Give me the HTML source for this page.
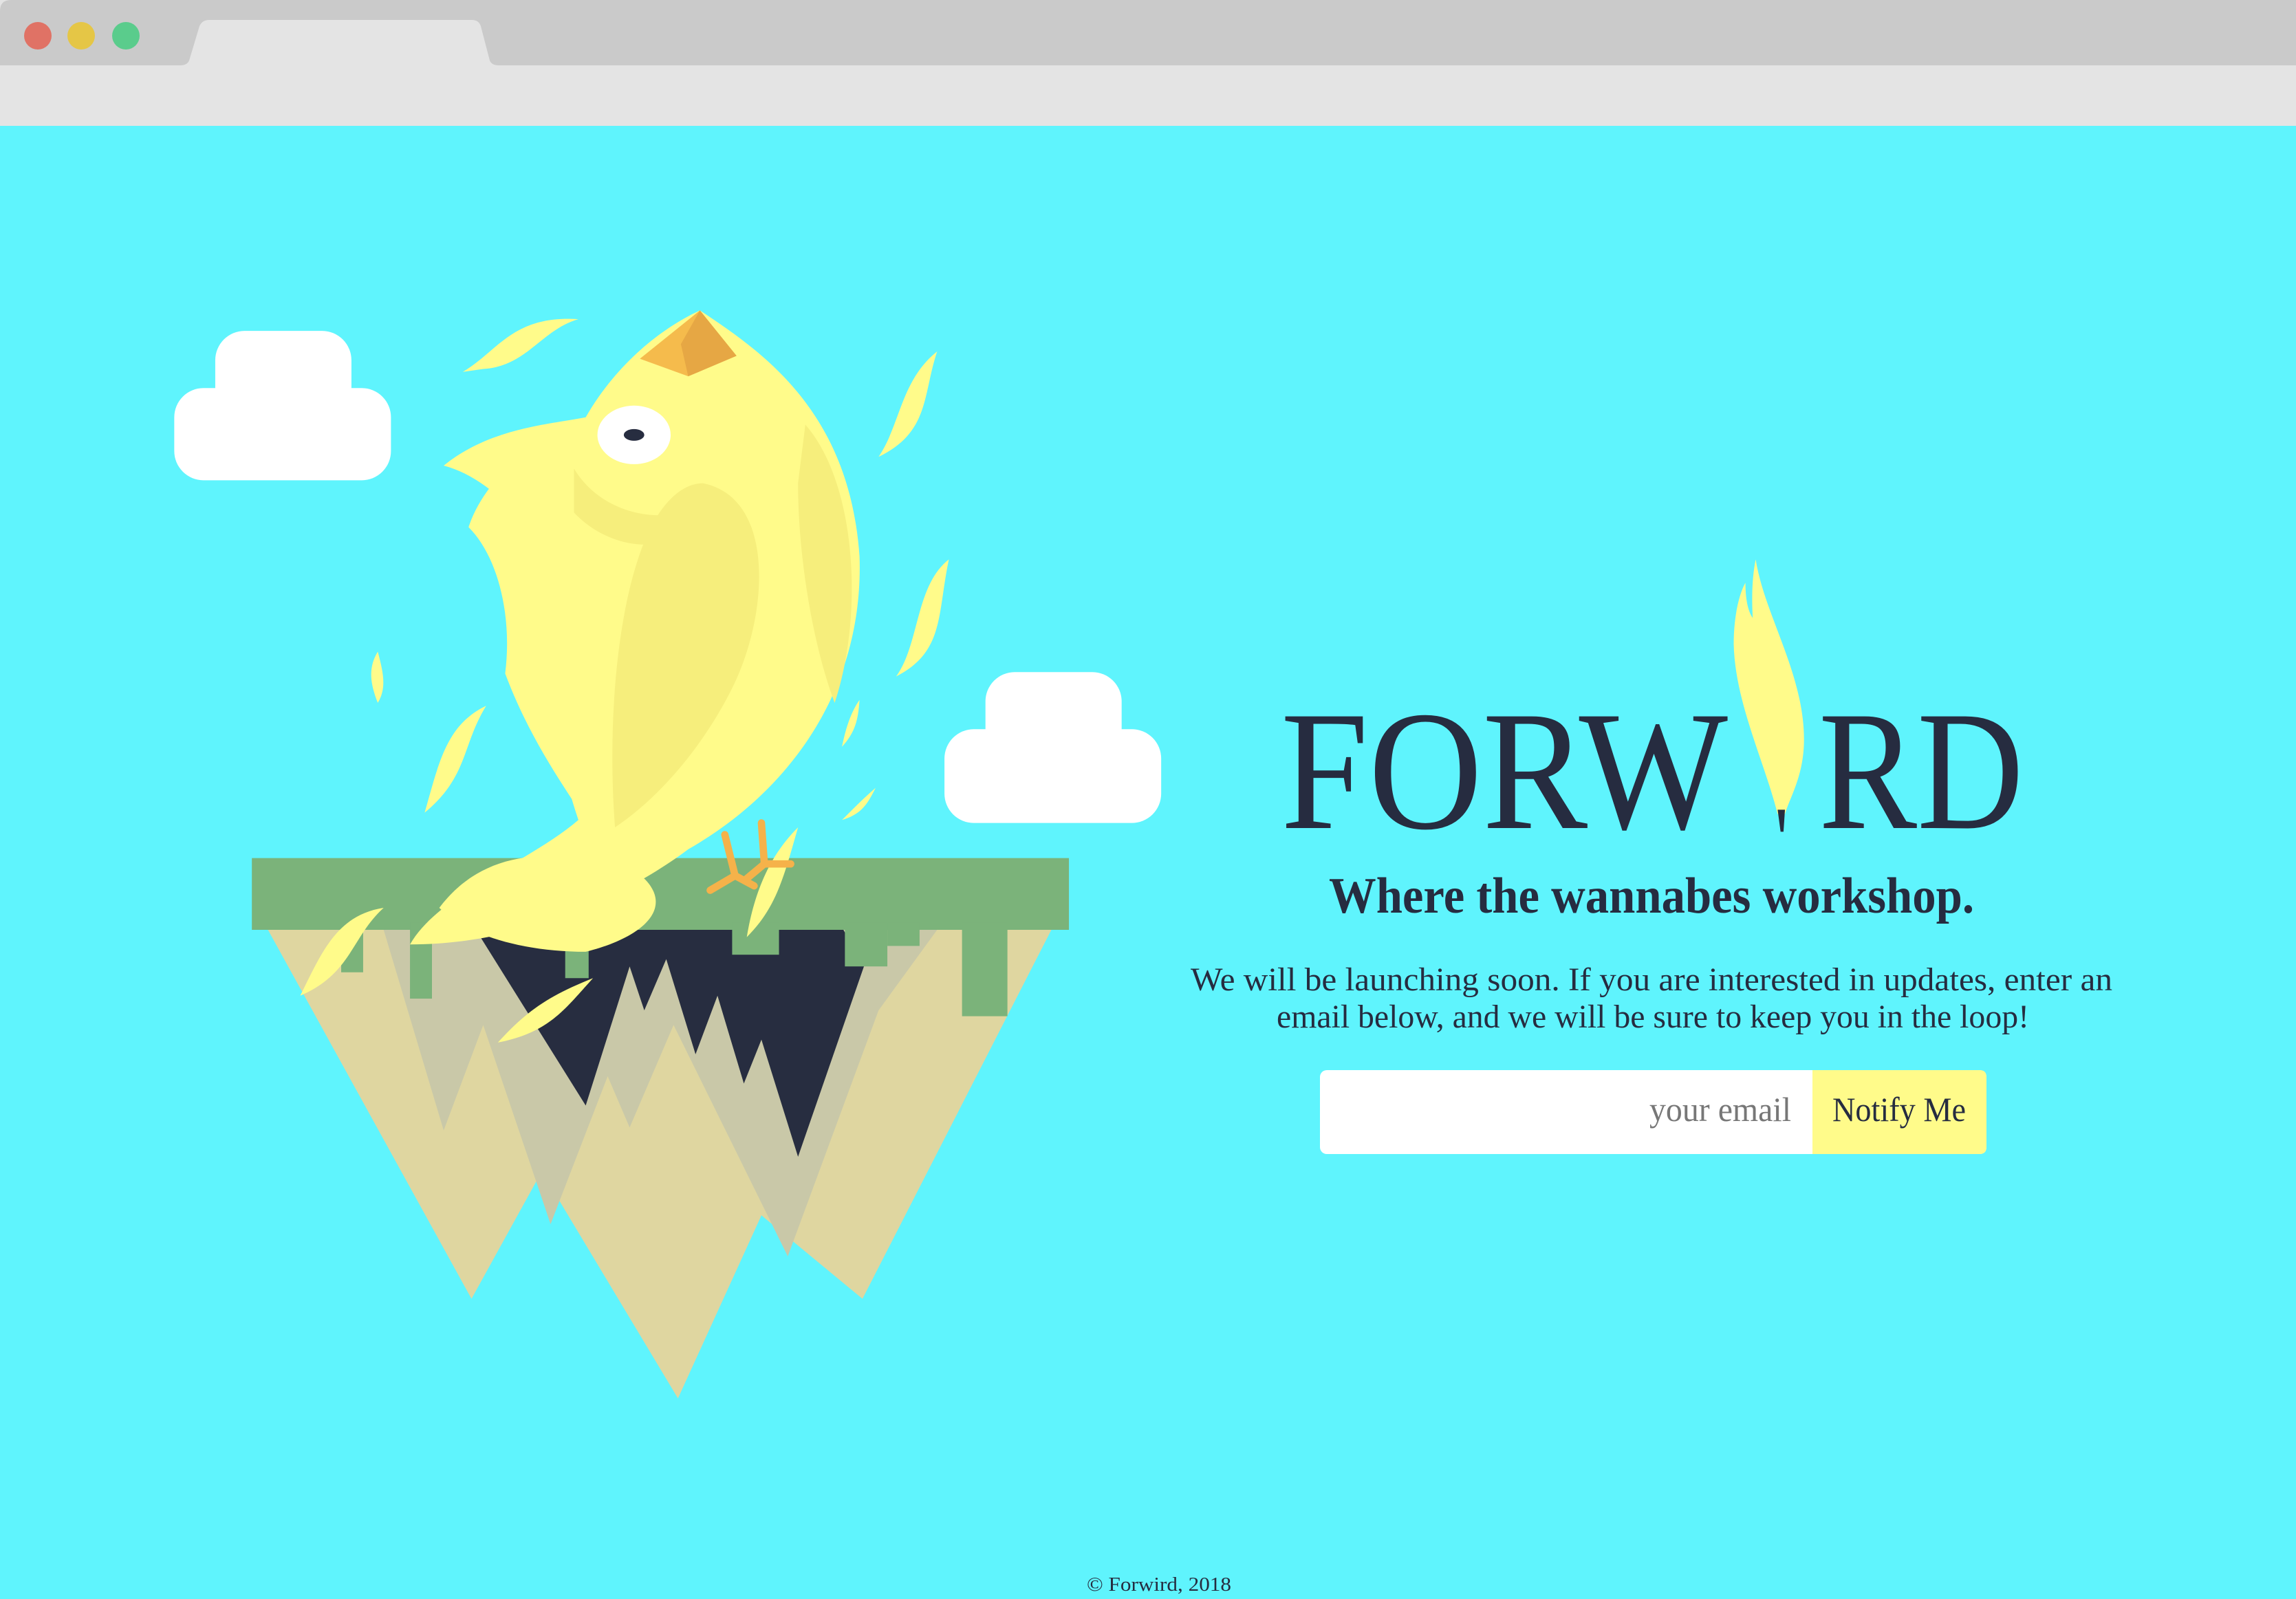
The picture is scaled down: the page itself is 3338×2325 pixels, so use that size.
<!DOCTYPE html>
<html><head><meta charset="utf-8"><style>
html,body{margin:0;padding:0;width:3338px;height:2325px;overflow:hidden;background:#5ff4fd;}
svg{position:absolute;left:0;top:0;}
</style></head><body>
<svg width="3338" height="2325" viewBox="0 0 3338 2325">
  <rect x="0" y="0" width="3338" height="183" fill="#e4e4e4"/>
  <path d="M0 95 L0 16 Q0 0 16 0 L3338 0 L3338 95 Z" fill="#cacaca"/>
  <path d="M262 95 Q272 95 275 88 L290 38 Q294 29 304 29 L686 29 Q696 29 699 38 L712 88 Q715 95 725 95 Z" fill="#e4e4e4"/>
  <circle cx="55" cy="52" r="20" fill="#e07265"/>
  <circle cx="118" cy="52" r="20" fill="#e5c646"/>
  <circle cx="183" cy="52" r="20" fill="#5acc8c"/>
</svg>

<svg width="3338" height="2325" viewBox="0 0 1568 1092" preserveAspectRatio="none">
  <g fill="#ffffff">
    <rect x="147" y="226" width="93" height="70" rx="20"/>
    <rect x="119" y="265" width="148" height="63" rx="20"/>
    <rect x="673" y="459" width="93" height="70" rx="20"/>
    <rect x="645" y="498" width="148" height="64" rx="20"/>
  </g>
  <polygon points="183,635 322,887 370,800 463,955 520,830 589,887 718,635" fill="#dfd6a0"/>
  <polygon points="262,635 303,772 330,700 376,836 415,735 430,770 460,700 538,858 600,690 640,635" fill="#c9c8a8"/>
  <polygon points="325,635 400,755 430,660 440,690 455,655 475,720 490,680 508,740 520,710 545,790 590,660 576,635" fill="#272d40"/>
  <rect x="172" y="586" width="558" height="49" fill="#7bb37a"/>
  <g fill="#7bb37a">
    <rect x="233" y="630" width="15" height="34"/>
    <rect x="280" y="630" width="15" height="52"/>
    <rect x="386" y="630" width="16" height="38"/>
    <rect x="500" y="630" width="32" height="22"/>
    <rect x="577" y="630" width="29" height="30"/>
    <rect x="606" y="630" width="22" height="16"/>
    <rect x="657" y="630" width="31" height="64"/>
  </g>
  <g fill="#fffb8a">
    <path d="M478 212 C520 240 580 280 587 380 C590 470 540 540 470 580 C430 610 360 645 280 645 C300 610 360 590 395 560 C375 500 365 430 378 380 C355 350 330 325 303 318 C335 292 375 290 400 285 C420 250 450 225 478 212 Z"/>
    <path d="M400 290 C360 300 330 330 320 360 C340 380 350 420 345 460 C360 500 380 530 400 560 Z"/>
    <path d="M316 254 C340 240 350 215 395 218 C370 225 360 250 330 252 Z"/>
    <path d="M600 312 C615 290 615 260 640 240 C630 270 635 295 600 312 Z"/>
    <path d="M612 462 C628 440 625 400 648 382 C640 420 645 445 612 462 Z"/>
    <path d="M290 555 C300 520 305 495 332 482 C315 510 320 530 290 555 Z"/>
    <path d="M205 680 C220 650 230 625 262 620 C240 640 240 665 205 680 Z"/>
    <path d="M340 712 C360 690 375 680 405 668 C385 690 375 705 340 712 Z"/>
    <path d="M300 620 C330 580 380 575 440 600 C460 620 440 640 400 650 C360 650 320 640 300 620 Z"/>
    <path d="M510 640 C515 610 525 585 545 565 C535 600 530 620 510 640 Z"/>
    <path d="M258 480 C252 465 252 455 258 445 C262 460 264 470 258 480 Z"/>
    <path d="M575 560 C585 550 590 545 598 538 C592 550 588 556 575 560 Z"/>
    <path d="M575 510 C578 495 582 485 587 478 C586 492 584 500 575 510 Z"/>
  </g>
  <path d="M480 330 C530 340 525 420 500 470 C480 510 450 545 420 565 C415 500 420 420 440 370 C450 345 465 330 480 330 Z" fill="#f6ee7c"/>
  <path d="M550 290 C585 330 590 420 570 480 C555 440 545 380 545 330 Z" fill="#f6ee7c"/>
  <path d="M392 320 C410 350 450 360 480 345 C470 380 420 380 392 350 Z" fill="#f6ee7c"/>
  <polygon points="437,245 478,212 503,243 470,257" fill="#f5bb4c"/>
  <polygon points="478,212 503,243 470,257 465,235" fill="#e6a744"/>
  <ellipse cx="433" cy="297" rx="25" ry="20" fill="#ffffff"/>
  <ellipse cx="433" cy="297" rx="7" ry="4" fill="#272d40"/>
  <g stroke="#f5b24a" stroke-width="5" stroke-linecap="round" fill="none">
    <path d="M495 570 L502 598 L485 608 M502 598 L515 605"/>
    <path d="M520 562 L522 590 L510 600 M522 590 L540 590"/>
  </g>
  <path d="M1199 382 C1205 420 1232 460 1232 505 C1232 530 1222 545 1219 556 L1214 556 C1205 520 1185 480 1184 440 C1184 420 1188 405 1192 398 C1192 410 1194 418 1197 422 C1196 405 1197 392 1199 382 Z" fill="#fffb8a"/>
  <polygon points="1214,553 1219,553 1218,568 1216,568" fill="#262c40"/>
</svg>

<svg width="3338" height="2325" viewBox="0 0 3338 2325">
  <g fill="#262c40" font-family="'Liberation Serif',serif">
    <text x="1862" y="1204" font-size="248" textLength="650" lengthAdjust="spacingAndGlyphs">FORW</text>
    <text x="2644" y="1204" font-size="248" textLength="298" lengthAdjust="spacingAndGlyphs">RD</text>
    <text x="1932" y="1327" font-size="74" font-weight="bold" textLength="938" lengthAdjust="spacingAndGlyphs">Where the wannabes workshop.</text>
    <text x="1731" y="1440" font-size="48" textLength="1340" lengthAdjust="spacingAndGlyphs">We will be launching soon. If you are interested in updates, enter an</text>
    <text x="1856" y="1494" font-size="48" textLength="1094" lengthAdjust="spacingAndGlyphs">email below, and we will be sure to keep you in the loop!</text>
  </g>
  <rect x="1919" y="1556" width="969" height="122" rx="10" fill="#ffffff"/>
  <path d="M2635 1556 L2878 1556 Q2888 1556 2888 1566 L2888 1668 Q2888 1678 2878 1678 L2635 1678 Z" fill="#fffb8a"/>
  <text x="2604" y="1630" font-family="'Liberation Serif',serif" font-size="50" fill="#777777" text-anchor="end" textLength="206" lengthAdjust="spacingAndGlyphs">your email</text>
  <text x="2664" y="1630" font-family="'Liberation Serif',serif" font-size="50" fill="#262c40" textLength="194" lengthAdjust="spacingAndGlyphs">Notify Me</text>
  <text x="1580" y="2313" font-family="'Liberation Serif',serif" font-size="28" fill="#262c40" textLength="210" lengthAdjust="spacingAndGlyphs">© Forwird, 2018</text>
</svg>
</body></html>
